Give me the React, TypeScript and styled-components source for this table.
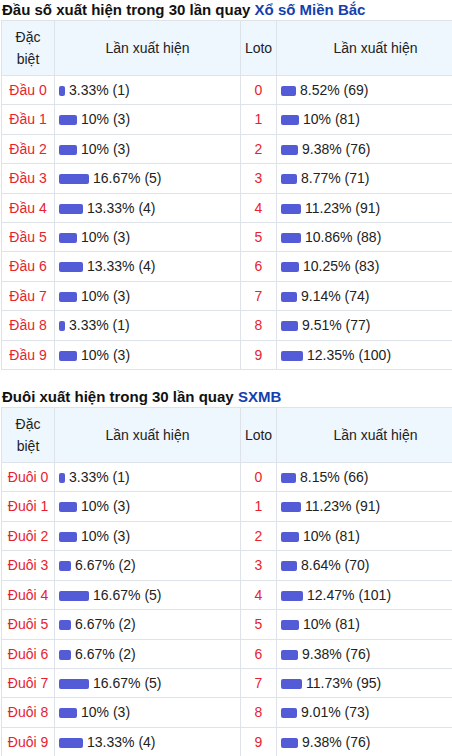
import styled, { createGlobalStyle } from "styled-components";

const GlobalStyle = createGlobalStyle`
  body {
    margin: 0;
    background: #fff;
    font-family: "Liberation Sans", Arial, sans-serif;
    color: #222;
    overflow: hidden;
  }
`;

const Wrapper = styled.div`
  width: 452px;
  padding-left: 1px;
  box-sizing: border-box;
`;

const Section = styled.section`
  & + & {
    margin-top: 17px;
  }
`;

const Title = styled.h3`
  margin: 0;
  padding-left: 1px;
  font-size: 15px;
  font-weight: bold;
  line-height: 20px;
  color: #111;
  white-space: nowrap;
  a {
    color: #163fae;
    text-decoration: none;
  }
`;

const Table = styled.table`
  width: 474px;
  border-collapse: collapse;
  table-layout: fixed;
  font-size: 14px;
  line-height: 22.4px;
`;

const Th = styled.th`
  border: 1px solid #dee3ea;
  background: #eef6fe;
  font-weight: normal;
  padding: 4.6px 3px;
  text-align: center;
  color: #222;
`;

const Td = styled.td<{ $center?: boolean; $red?: boolean }>`
  border: 1px solid #dee3ea;
  padding: 3px 4px;
  text-align: ${(p) => (p.$center ? "center" : "left")};
  color: ${(p) => (p.$red ? "#e7222e" : "#222")};
  white-space: nowrap;
`;

const Bar = styled.span`
  display: inline-block;
  height: 10px;
  border-radius: 2px;
  background: #535bd6;
  margin-right: 4px;
  vertical-align: -1px;
`;

type Row = [string, number, number, number, number];

const dau: Row[] = [
  ["Đầu 0", 3.33, 1, 8.52, 69],
  ["Đầu 1", 10, 3, 10, 81],
  ["Đầu 2", 10, 3, 9.38, 76],
  ["Đầu 3", 16.67, 5, 8.77, 71],
  ["Đầu 4", 13.33, 4, 11.23, 91],
  ["Đầu 5", 10, 3, 10.86, 88],
  ["Đầu 6", 13.33, 4, 10.25, 83],
  ["Đầu 7", 10, 3, 9.14, 74],
  ["Đầu 8", 3.33, 1, 9.51, 77],
  ["Đầu 9", 10, 3, 12.35, 100],
];

const duoi: Row[] = [
  ["Đuôi 0", 3.33, 1, 8.15, 66],
  ["Đuôi 1", 10, 3, 11.23, 91],
  ["Đuôi 2", 10, 3, 10, 81],
  ["Đuôi 3", 6.67, 2, 8.64, 70],
  ["Đuôi 4", 16.67, 5, 12.47, 101],
  ["Đuôi 5", 6.67, 2, 10, 81],
  ["Đuôi 6", 6.67, 2, 9.38, 76],
  ["Đuôi 7", 16.67, 5, 11.73, 95],
  ["Đuôi 8", 10, 3, 9.01, 73],
  ["Đuôi 9", 13.33, 4, 9.38, 76],
];

function Stat({ pct, count }: { pct: number; count: number }) {
  return (
    <>
      <Bar style={{ width: Math.round(pct * 1.8) }} />
      {pct}% ({count})
    </>
  );
}

function StatTable({ rows }: { rows: Row[] }) {
  return (
    <Table>
      <colgroup>
        <col style={{ width: 53 }} />
        <col style={{ width: 186 }} />
        <col style={{ width: 36 }} />
        <col />
      </colgroup>
      <thead>
        <tr>
          <Th>Đặc biệt</Th>
          <Th>Lần xuất hiện</Th>
          <Th>Loto</Th>
          <Th>Lần xuất hiện</Th>
        </tr>
      </thead>
      <tbody>
        {rows.map(([label, p1, c1, p2, c2], i) => (
          <tr key={label}>
            <Td $center $red>{label}</Td>
            <Td><Stat pct={p1} count={c1} /></Td>
            <Td $center $red>{i}</Td>
            <Td><Stat pct={p2} count={c2} /></Td>
          </tr>
        ))}
      </tbody>
    </Table>
  );
}

export default function App() {
  return (
    <Wrapper>
      <GlobalStyle />
      <Section>
        <Title>
          Đầu số xuất hiện trong 30 lần quay <a href="#">Xổ số Miền Bắc</a>
        </Title>
        <StatTable rows={dau} />
      </Section>
      <Section>
        <Title>
          Đuôi xuất hiện trong 30 lần quay <a href="#">SXMB</a>
        </Title>
        <StatTable rows={duoi} />
      </Section>
    </Wrapper>
  );
}
